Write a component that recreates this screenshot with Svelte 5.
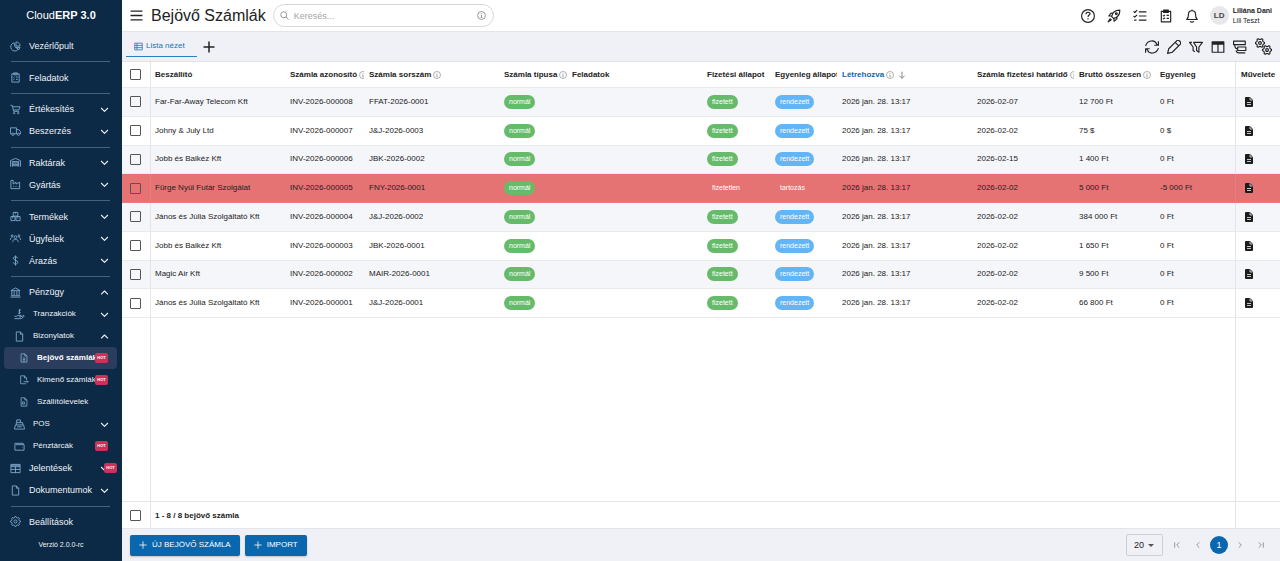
<script lang="ts">
    function gear(cx: number, cy: number, r: number, teeth = 8) {
        let d = '';
        for(let i = 0; i < teeth * 4; i++) {
            let radius = i % 4 < 2 ? r : r * 0.76;
            let a = (i - 0.5) * Math.PI / (teeth * 2);
            d += `${i ? 'L' : 'M'}${(cx + radius * Math.cos(a)).toFixed(1)} ${(cy + radius * Math.sin(a)).toFixed(1)}`;
        }
        return d + 'z' + circle(cx, cy, r * 0.3);
    }

    function circle(cx: number, cy: number, r: number) {
        return `M${cx - r} ${cy}a${r} ${r} 0 1 0 ${2 * r} 0a${r} ${r} 0 1 0 ${-2 * r} 0z`;
    }

    const page = 'M5 2h9l5 5v15H5zM14 2v5h5';

    const icons: Record<string, string> = {
        pie: 'M9 4a9 9 0 1 0 9 14l-7-5zM13 2a9 9 0 0 1 9 9h-9zM14 14h8l-3 5z',
        clipboard: 'M4 4h16v18H4zM8 2h8v4H8zM7 11l1 1 2-2M13 11h4M7 16l1 1 2-2M13 16h4',
        cart: 'M1 3h4l3 13h12M6 6h16l-3 7H8' + circle(9, 20, 1.5) + circle(18, 20, 1.5),
        truck: 'M4 17H1V4h13v13H9M14 8h5l4 4v5h-2M14 17h2' + circle(6.5, 18, 2.5) + circle(18.5, 18, 2.5),
        warehouse: 'M1 21V8l11-5 11 5v13M5 21V10h14v11M5 13h14M5 16h14M5 19h14',
        factory: 'M2 21V3h5v8l6-4v4l8-4v14zM7 16h2M12 16h2M17 16h1',
        boxes: 'M7 3h10v8H7zM12 3v3M2 12h9v9H2zM13 12h9v9h-9zM6 12v4M17 12v4',
        users: circle(12, 9, 3) + circle(4.5, 6, 2) + circle(19.5, 6, 2) + 'M6 20v-2c0-5 12-5 12 0v2M1 15v-2c0-2 2-3 4-3M23 15v-2c0-2-2-3-4-3',
        dollar: 'M12 1v22M17 7c0-4-10-4-10 0 0 5 10 4 10 9 0 5-10 5-10 0',
        bank: 'M2 8l10-6 10 6zM4 9v9M9 9v9M15 9v9M20 9v9M2 19h20M1 22h22',
        hand: 'M15 2c-3-1-6 2-3 4s2 5-3 3M12 0v11M1 16h4l4-2h6v3h-4M15 17l6-3c2 1 1 3 0 3l-5 4H1',
        page,
        pageIn: page + 'M12 10v7M9 14l3 3 3-3M9 19h6',
        pageOut: 'M17 21H4V2h9l5 5v5M13 2v5h5M11 16h11M19 13l3 3-3 3',
        pageList: page + 'M8 12h5v5H8zM15 18h1',
        register: 'M3 13h18l2 9H1zM5 13V8h14v5M6 8V2h8v6M7 17h10',
        wallet: 'M2 5h18v3M2 5v15h20V8H4M17 14h1',
        table: 'M2 3h20v18H2zM2 8h20M2 14h20M12 8v13M2 5h20',
        grid: 'M2 3h20v18H2zM2 9h20M2 15h20M8 3v18',
        gear: gear(12, 12, 11),
        gears: gear(7, 7, 6.5, 6) + gear(17, 17, 6.5, 6),
        down: 'M3 8l9 9 9-9',
        up: 'M3 17l9-9 9 9',
        menu: 'M1 4h22M1 12h22M1 20h22',
        search: circle(10, 10, 8) + 'M16 16l7 7',
        info: circle(12, 12, 10.5) + 'M12 11v6M12 6v2M10 11h2M10 17h4',
        plus: 'M12 1v22M1 12h22',
        help: circle(12, 12, 11) + 'M8.5 9c0-5 7.5-4 7-.5-.3 2-3.5 2-3.5 5M12 16v2',
        rocket: 'M8 13C9 7 14 2 22 2c0 8-5 13-11 14zM8 12H3l4-5h4M12 16v5l5-4v-4M6 16l-4 6 6-4' + circle(16, 8, 1.5),
        checklist: 'M1 4l2 2 4-4M1 12l2 2 4-4M10 5h13M10 12h13M10 19h13M2 19h4',
        bell: 'M3 18c2-2 3-4 3-9 0-8 12-8 12 0 0 5 1 7 3 9zM12 1v2M9 21c1 2 5 2 6 0',
        refresh: 'M1 10C4 0 17-1 20 7l2 2M23 2v7h-7M23 14c-3 10-16 11-19 3l-2-2M1 22v-7h7',
        pencil: 'M1 23l2-8L17 1c3-2 8 3 6 6L9 21zM14 4l6 6',
        filter: 'M8 4h15l-6 8v9l-4-3v-6zM5 4H1l6 8v6l3 2',
        columns: 'M2 3h20v18H2zM2 5h20M2 7h20M12 7v14',
        tree: 'M1 2h20v6H1zM8 12h14v6H8zM3 8c0 5 1 7 5 7M5 18c1 3 2 4 5 4h11',
        arrow: 'M12 2v20M4 14l8 8 8-8',
        first: 'M5 4v16M19 4l-8 8 8 8',
        prev: 'M16 4l-8 8 8 8',
        next: 'M8 4l8 8-8 8',
        last: 'M19 4v16M5 4l8 8-8 8'
    };

    type Item = { label: string, icon: string, level?: number, chevron?: string, hot?: boolean, active?: boolean };

    const groups: Item[][] = [
        [{ label: 'Vezérlőpult', icon: 'pie' }],
        [{ label: 'Feladatok', icon: 'clipboard' }],
        [
            { label: 'Értékesítés', icon: 'cart', chevron: 'down' },
            { label: 'Beszerzés', icon: 'truck', chevron: 'down' }
        ],
        [
            { label: 'Raktárak', icon: 'warehouse', chevron: 'down' },
            { label: 'Gyártás', icon: 'factory', chevron: 'down' }
        ],
        [
            { label: 'Termékek', icon: 'boxes', chevron: 'down' },
            { label: 'Ügyfelek', icon: 'users', chevron: 'down' },
            { label: 'Árazás', icon: 'dollar', chevron: 'down' }
        ],
        [
            { label: 'Pénzügy', icon: 'bank', chevron: 'up' },
            { label: 'Tranzakciók', icon: 'hand', level: 1, chevron: 'down' },
            { label: 'Bizonylatok', icon: 'page', level: 1, chevron: 'up' },
            { label: 'Bejövő számlák', icon: 'pageIn', level: 2, hot: true, active: true },
            { label: 'Kimenő számlák', icon: 'pageOut', level: 2, hot: true },
            { label: 'Szállítólevelek', icon: 'pageList', level: 2 },
            { label: 'POS', icon: 'register', level: 1, chevron: 'down' },
            { label: 'Pénztárcák', icon: 'wallet', level: 1, hot: true },
            { label: 'Jelentések', icon: 'table', chevron: 'down', hot: true },
            { label: 'Dokumentumok', icon: 'page', chevron: 'down' }
        ],
        [{ label: 'Beállítások', icon: 'gear' }]
    ];

    const columns = [
        { label: 'Beszállító', cls: 'wide' },
        { label: 'Számla azonosító', cls: 'number', info: true },
        { label: 'Számla sorszám', cls: 'wide', info: true },
        { label: 'Számla típusa', cls: 'narrow', info: true },
        { label: 'Feladatok', cls: 'wide' },
        { label: 'Fizetési állapot', cls: 'narrow' },
        { label: 'Egyenleg állapot', cls: 'state' },
        { label: 'Létrehozva', cls: 'wide', info: true, sorted: true },
        { label: 'Számla fizetési határidő', cls: 'due', info: true },
        { label: 'Bruttó összesen', cls: 'total', info: true },
        { label: 'Egyenleg', cls: 'rest' }
    ];

    const invoices = [
        { supplier: 'Far-Far-Away Telecom Kft', id: 'INV-2026-000008', serial: 'FFAT-2026-0001', due: '2026-02-07', total: '12 700 Ft', balance: '0 Ft', paid: true },
        { supplier: 'Johny & July Ltd', id: 'INV-2026-000007', serial: 'J&J-2026-0003', due: '2026-02-02', total: '75 $', balance: '0 $', paid: true },
        { supplier: 'Jobb és Balkéz Kft', id: 'INV-2026-000006', serial: 'JBK-2026-0002', due: '2026-02-15', total: '1 400 Ft', balance: '0 Ft', paid: true },
        { supplier: 'Fürge Nyúl Futár Szolgálat', id: 'INV-2026-000005', serial: 'FNY-2026-0001', due: '2026-02-02', total: '5 000 Ft', balance: '-5 000 Ft', paid: false },
        { supplier: 'János és Júlia Szolgáltató Kft', id: 'INV-2026-000004', serial: 'J&J-2026-0002', due: '2026-02-02', total: '384 000 Ft', balance: '0 Ft', paid: true },
        { supplier: 'Jobb és Balkéz Kft', id: 'INV-2026-000003', serial: 'JBK-2026-0001', due: '2026-02-02', total: '1 650 Ft', balance: '0 Ft', paid: true },
        { supplier: 'Magic Air Kft', id: 'INV-2026-000002', serial: 'MAIR-2026-0001', due: '2026-02-02', total: '9 500 Ft', balance: '0 Ft', paid: true },
        { supplier: 'János és Júlia Szolgáltató Kft', id: 'INV-2026-000001', serial: 'J&J-2026-0001', due: '2026-02-02', total: '66 800 Ft', balance: '0 Ft', paid: true }
    ];

    const topActions = [
        ['help', 'Súgó'], ['rocket', 'Újdonságok'], ['checklist', 'Teendők'],
        ['clipboard', 'Feladatok'], ['bell', 'Értesítések']
    ];
    const viewActions = [
        ['refresh', 'Frissítés'], ['pencil', 'Szerkesztés'], ['filter', 'Szűrők'],
        ['columns', 'Oszlopok'], ['tree', 'Csoportosítás'], ['gears', 'Beállítások']
    ];

    let search = $state('');
    let pageSize = $state('20');
    let selected = $state(invoices.map(() => false));
    let allSelected = $derived(selected.every(s => s));

    function toggleAll() {
        let value = !allSelected;
        selected = selected.map(() => value);
    }
</script>

{#snippet icon(name: string, cls: string)}
    <svg class="icon {cls}" viewBox="0 0 24 24" aria-hidden="true"><path d={icons[name]} /></svg>
{/snippet}

<div class="app">
    <aside>
        <a class="logo" href="#home">Cloud<b>ERP 3.0</b></a>
        <nav>
            {#each groups as group, i}
                {#if i > 0}<hr />{/if}
                {#each group as item}
                    <a class="item level{item.level ?? 0}" class:active={item.active} href="#{item.icon}">
                        {@render icon(item.icon, 'navIcon')}
                        <span class="label">{item.label}</span>
                        {#if item.chevron}{@render icon(item.chevron, 'chevron')}{/if}
                        {#if item.hot}<span class="hot" class:outer={item.chevron}>HOT</span>{/if}
                    </a>
                {/each}
            {/each}
        </nav>
        <div class="version">Verzió 2.0.0-rc</div>
    </aside>

    <main>
        <header>
            <button class="iconBtn" aria-label="Menü">{@render icon('menu', 'menu')}</button>
            <h1>Bejövő Számlák</h1>
            <label class="search">
                {@render icon('search', 'small')}
                <input type="text" placeholder="Keresés..." aria-label="Keresés" bind:value={search} />
                {@render icon('info', 'small')}
            </label>
            <div class="actions top">
                {#each topActions as [name, label]}
                    <button class="iconBtn" aria-label={label}>{@render icon(name, '')}</button>
                {/each}
            </div>
            <span class="avatar">LD</span>
            <div class="user">
                <b>Liliána Dani</b>
                <span>Lili Teszt</span>
            </div>
        </header>

        <div class="toolbar">
            <button class="tab">{@render icon('grid', 'tabIcon')}Lista nézet</button>
            <button class="iconBtn add" aria-label="Új nézet">{@render icon('plus', 'bold')}</button>
            <div class="actions">
                {#each viewActions as [name, label]}
                    <button class="iconBtn" aria-label={label}>{@render icon(name, name == 'gears' ? 'large' : '')}</button>
                {/each}
            </div>
        </div>

        <table>
            <colgroup>
                <col class="check" />
                {#each columns as column}<col class={column.cls} />{/each}
                <col class="ops" />
            </colgroup>
            <thead>
                <tr>
                    <th class="check"><input type="checkbox" aria-label="Összes kijelölése" checked={allSelected} onchange={toggleAll} /></th>
                    {#each columns as column}
                        <th class:sorted={column.sorted}>
                            <div class="head">
                                <span>{column.label}</span>
                                {#if column.info}{@render icon('info', 'hint')}{/if}
                                {#if column.sorted}{@render icon('arrow', 'sort')}{/if}
                            </div>
                        </th>
                    {/each}
                    <th class="ops">Művelete</th>
                </tr>
            </thead>
            <tbody>
                {#each invoices as invoice, i}
                    <tr class:overdue={!invoice.paid}>
                        <td class="check"><input type="checkbox" aria-label={invoice.id} bind:checked={selected[i]} /></td>
                        <td>{invoice.supplier}</td>
                        <td>{invoice.id}</td>
                        <td>{invoice.serial}</td>
                        <td><span class="chip green">normál</span></td>
                        <td></td>
                        <td><span class="chip" class:green={invoice.paid}>{invoice.paid ? 'fizetett' : 'fizetetlen'}</span></td>
                        <td><span class="chip" class:blue={invoice.paid}>{invoice.paid ? 'rendezett' : 'tartozás'}</span></td>
                        <td>2026 jan. 28. 13:17</td>
                        <td>{invoice.due}</td>
                        <td>{invoice.total}</td>
                        <td>{invoice.balance}</td>
                        <td class="ops">
                            <button class="docBtn" aria-label="Bizonylat megnyitása">
                                <svg viewBox="0 0 16 20" aria-hidden="true">
                                    <path d="M2 0h8l6 6v12a2 2 0 0 1-2 2H2a2 2 0 0 1-2-2V2a2 2 0 0 1 2-2z" fill="#1c1c1c" />
                                    <path d="M10 1v5h5M4 11h8M4 15h8" fill="none" stroke="#fff" stroke-width="1.5" />
                                </svg>
                            </button>
                        </td>
                    </tr>
                {/each}
            </tbody>
        </table>

        <div class="strip filler"><span></span><span></span><span></span></div>
        <div class="strip summary">
            <span class="check"><input type="checkbox" aria-label="Oldal kijelölése" checked={allSelected} onchange={toggleAll} /></span>
            <span class="count">1 - 8 / 8 bejövő számla</span>
            <span></span>
        </div>

        <footer>
            <button class="primary">{@render icon('plus', 'tiny')}ÚJ BEJÖVŐ SZÁMLA</button>
            <button class="primary">{@render icon('plus', 'tiny')}IMPORT</button>
            <select aria-label="Sorok száma" bind:value={pageSize}>
                <option>20</option>
                <option>50</option>
                <option>100</option>
            </select>
            <div class="pager">
                <button aria-label="Első oldal">{@render icon('first', 'tiny')}</button>
                <button aria-label="Előző oldal">{@render icon('prev', 'tiny')}</button>
                <button class="current">1</button>
                <button aria-label="Következő oldal">{@render icon('next', 'tiny')}</button>
                <button aria-label="Utolsó oldal">{@render icon('last', 'tiny')}</button>
            </div>
        </footer>
    </main>
</div>

<style>
    :global(body) {
        margin: 0;
        font: 8px/12px "Liberation Sans", Arial, sans-serif;
        color: #222;
        background: #fff;
    }

    .app, .app * {
        box-sizing: border-box;
    }

    .app {
        display: flex;
        min-height: 100vh;
    }

    button, input, select {
        font: inherit;
        color: inherit;
        background: none;
        border: none;
        padding: 0;
        margin: 0;
    }

    button {
        cursor: pointer;
    }

    .icon {
        width: 14px;
        height: 14px;
        flex: none;
        fill: none;
        stroke: currentColor;
        stroke-width: 2;
        stroke-linejoin: round;
    }

    .icon.bold {
        stroke-width: 3;
    }

    .icon.large {
        width: 17px;
        height: 17px;
        stroke-width: 1.6;
    }

    .icon.menu {
        width: 13px;
        height: 13px;
        stroke-width: 2.4;
    }

    .icon.small {
        width: 9px;
        height: 9px;
        color: #777;
    }

    .icon.tiny {
        width: 8px;
        height: 8px;
        stroke-width: 3;
    }

    .icon.tabIcon {
        width: 9px;
        height: 9px;
        stroke-width: 2;
    }

    aside {
        width: 122px;
        flex: none;
        display: flex;
        flex-direction: column;
        background: #0c2945;
        color: #eef3f8;
    }

    .logo {
        height: 35px;
        padding-top: 8px;
        font-size: 11px;
        line-height: 15px;
        text-align: center;
        color: #fff;
        text-decoration: none;
    }

    nav {
        flex: 1;
        max-height: 498px;
        display: flex;
        flex-direction: column;
        padding: 0 5px 0 4px;
    }

    hr {
        width: 99px;
        height: 1px;
        margin: auto 7px;
        border: none;
        background: #46627c;
    }

    .item {
        position: relative;
        height: 22px;
        flex: none;
        display: flex;
        align-items: center;
        gap: 8px;
        padding: 0 8px 0 6px;
        border-radius: 4px;
        font-size: 9px;
        color: inherit;
        text-decoration: none;
        white-space: nowrap;
    }

    .item.level1 {
        padding-left: 10px;
        font-size: 8px;
    }

    .item.level2 {
        padding-left: 15px;
        font-size: 8px;
    }

    .item.active {
        background: #2b3d5d;
        color: #fff;
        font-weight: bold;
    }

    .label {
        flex: 1;
    }

    .icon.navIcon {
        width: 11px;
        height: 11px;
        color: #7fa9c9;
    }

    .level2 .icon.navIcon {
        width: 10px;
        height: 10px;
    }

    .icon.chevron {
        width: 9px;
        height: 9px;
        stroke-width: 3;
    }

    .hot {
        position: absolute;
        right: 9px;
        top: 6px;
        width: 13px;
        height: 10px;
        border-radius: 2px;
        background: #cb3159;
        color: #fff;
        font-size: 4px;
        line-height: 10px;
        font-weight: bold;
        text-align: center;
    }

    .hot.outer {
        right: 0;
    }

    .version {
        padding-top: 6px;
        font-size: 7px;
        text-align: center;
    }

    main {
        flex: 1;
        min-width: 0;
        display: flex;
        flex-direction: column;
    }

    header {
        height: 32px;
        flex: none;
        display: flex;
        align-items: center;
        padding: 0 8px;
        border-bottom: 1px solid #e3e4e9;
    }

    h1 {
        margin: 0 7px 0 8px;
        font-size: 16px;
        line-height: 20px;
        font-weight: normal;
        white-space: nowrap;
    }

    .search {
        width: 221px;
        height: 23px;
        display: flex;
        align-items: center;
        gap: 5px;
        padding: 0 7px 0 6px;
        border: 1px solid #d8d8dc;
        border-radius: 12px;
    }

    .search input {
        flex: 1;
        min-width: 0;
        font-size: 9px;
        outline: none;
    }

    .search input::placeholder {
        color: #a5a5a5;
    }

    .iconBtn {
        display: flex;
        flex: none;
    }

    .actions {
        display: flex;
        align-items: center;
        gap: 8px;
        margin-left: auto;
    }

    .actions.top {
        gap: 12px;
    }

    .avatar {
        width: 19px;
        height: 19px;
        margin: 0 4px 0 11px;
        border-radius: 50%;
        background: #e8e8ea;
        color: #444;
        font-weight: bold;
        line-height: 19px;
        text-align: center;
    }

    .user {
        display: flex;
        flex-direction: column;
        font-size: 7px;
        line-height: 10px;
        white-space: nowrap;
    }

    .toolbar {
        height: 30px;
        flex: none;
        display: flex;
        align-items: center;
        padding: 0 8px 0 4px;
        background: #f0f1f7;
        border-bottom: 1px solid #e1e3e9;
    }

    .tab {
        height: 20px;
        display: flex;
        align-items: center;
        gap: 3px;
        padding: 0 12px 0 8px;
        border-bottom: 1px solid #2b80c0;
        color: #1a73b5;
        white-space: nowrap;
    }

    .add .icon {
        width: 12px;
        height: 12px;
    }

    .add {
        margin-left: 6px;
    }

    table {
        width: 100%;
        height: 256px;
        table-layout: fixed;
        border-collapse: separate;
        border-spacing: 0;
    }

    col.check { width: 29px; }
    col.wide { width: 135px; }
    col.number { width: 79px; }
    col.narrow { width: 68px; }
    col.state { width: 67px; }
    col.due { width: 102px; }
    col.total { width: 81px; }
    col.ops { width: 45px; }

    th, td {
        padding: 0 0 0 4px;
        border-bottom: 1px solid #e8eaee;
        text-align: left;
        white-space: nowrap;
        overflow: hidden;
    }

    th {
        height: 26px;
    }

    th.sorted {
        color: #1068ac;
    }

    .head {
        display: flex;
        align-items: center;
        gap: 2px;
        margin-right: 1px;
        overflow: hidden;
    }

    .icon.hint, .icon.sort {
        width: 8px;
        height: 8px;
        color: #888;
    }

    .icon.sort {
        margin-left: 2px;
        stroke-width: 3;
    }

    th.check, td.check {
        padding-left: 8px;
        border-right: 1px solid #e4e5ea;
    }

    th.ops, td.ops {
        padding-left: 5px;
        border-left: 1px solid #e4e5ea;
    }

    td.ops {
        padding-left: 9px;
    }

    tbody tr:nth-child(odd) {
        background: #f5f6fa;
    }

    tbody tr.overdue {
        background: #e57373;
    }

    tr.overdue td {
        border-color: #e57f7f;
    }

    input[type="checkbox"] {
        appearance: none;
        display: block;
        width: 11px;
        height: 11px;
        border: 1px solid #555;
        border-radius: 1px;
    }

    input[type="checkbox"]:checked {
        background: #0a67ae;
    }

    .chip {
        display: inline-block;
        height: 14px;
        padding: 0 5px;
        border-radius: 7px;
        font-size: 7px;
        line-height: 14px;
        color: #fff;
        vertical-align: middle;
    }

    .chip.green {
        background: #66bb6a;
    }

    .chip.blue {
        background: #64b5f6;
    }

    .docBtn {
        display: block;
    }

    .docBtn svg {
        display: block;
        width: 8px;
        height: 10px;
    }

    .strip {
        display: grid;
        grid-template-columns: 29px 1fr 45px;
    }

    .strip span:first-child {
        border-right: 1px solid #e4e5ea;
    }

    .strip span:last-child {
        border-left: 1px solid #e4e5ea;
    }

    .filler {
        flex: 1;
    }

    .summary {
        height: 28px;
        border-top: 1px solid #e4e5ea;
        border-bottom: 1px solid #e4e5ea;
    }

    .summary .check {
        padding: 8px 0 0 8px;
    }

    .count {
        padding: 8px 0 0 4px;
        font-weight: bold;
    }

    footer {
        height: 32px;
        flex: none;
        display: flex;
        align-items: center;
        gap: 5px;
        padding: 0 10px 0 8px;
        background: #f0f1f7;
    }

    .primary {
        height: 21px;
        display: flex;
        align-items: center;
        gap: 5px;
        padding: 0 9px;
        border-radius: 2px;
        background: #0a67ae;
        color: #fff;
        white-space: nowrap;
        box-shadow: 0 1px 2px #0003;
    }

    .primary .icon {
        stroke-width: 2.4;
    }

    select {
        appearance: none;
        width: 37px;
        height: 22px;
        margin-left: auto;
        padding-left: 7px;
        border: 1px solid #cfd0d6;
        border-radius: 2px;
        font-size: 9px;
        background: url("data:image/svg+xml,%3Csvg xmlns='http://www.w3.org/2000/svg' viewBox='0 0 6 3'%3E%3Cpath d='M0 0h6L3 3z' fill='%23555'/%3E%3C/svg%3E") no-repeat right 8px center / 6px 3px;
    }

    .pager {
        display: flex;
        gap: 3px;
        color: #999;
    }

    .pager button {
        width: 18px;
        height: 18px;
        display: flex;
        align-items: center;
        justify-content: center;
        border-radius: 50%;
        font-size: 9px;
    }

    .pager .current {
        background: #0a67ae;
        color: #fff;
    }
</style>
